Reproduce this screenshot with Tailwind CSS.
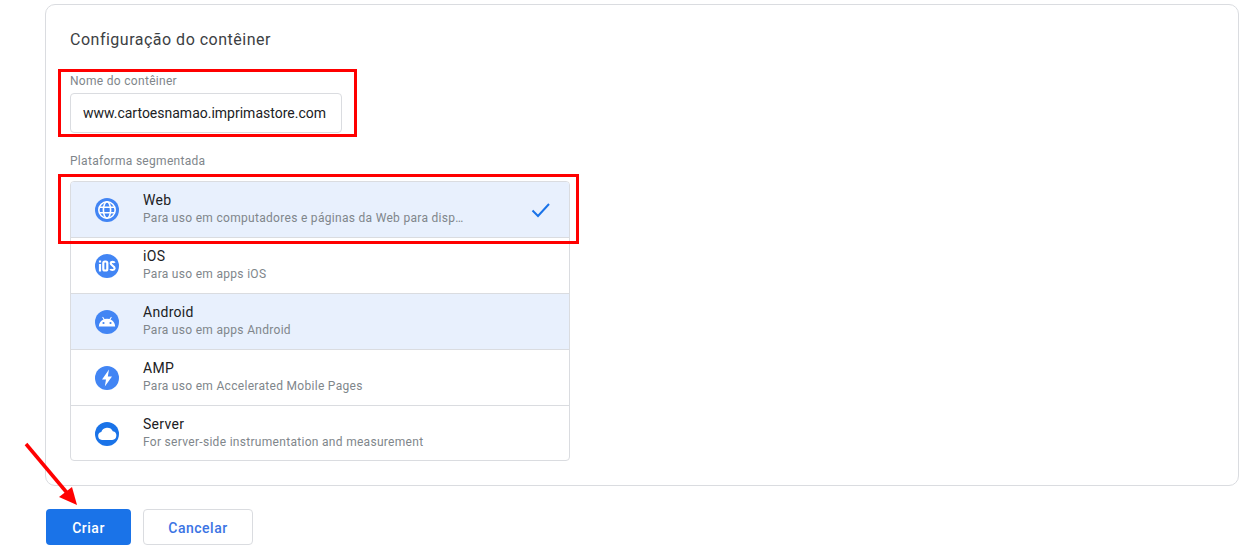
<!DOCTYPE html>
<html lang="pt">
<head>
<meta charset="utf-8">
<script src="https://cdn.jsdelivr.net/npm/@tailwindcss/browser@4"></script>
<title>Configuração do contêiner</title>
</head>
<body class="relative h-[548px] w-[1257px] overflow-hidden bg-white font-['Roboto',sans-serif]">
<main class="pl-[45px] pt-[4px]">
  <section class="h-[482px] w-[1194px] rounded-[10px] border border-[#dadce0] pl-[24px] pt-[25px]">
    <h2 class="h-[20px] text-[16px] leading-[20px] tracking-[0.5px] text-[#3c4043]">Configuração do contêiner</h2>
    <p class="mt-[24px] h-[14px] text-[12px] leading-[14px] tracking-[0.3px] text-[#80868b]">Nome do contêiner</p>
    <div class="mt-[5px] flex h-[40px] w-[272px] items-center rounded-[4px] border border-[#dadce0] pl-[12px] text-[14px] tracking-[0px] text-[#202124]">www.cartoesnamao.imprimastore.com</div>
    <p class="mt-[21px] h-[14px] text-[12px] leading-[14px] tracking-[0.3px] text-[#80868b]">Plataforma segmentada</p>
    <ul class="mt-[13px] w-[500px] overflow-hidden rounded-[4px] border border-[#dadce0]">
      <li class="flex h-[56px] items-center border-b border-[#dadce0] bg-[#e8f0fd] pl-[24px]">
        <svg class="h-[24px] w-[24px] shrink-0" viewBox="0 0 24 24"><circle cx="12" cy="12" r="12" fill="#4285f4"/><g fill="none" stroke="#fff" stroke-width="1.600"><circle cx="12" cy="12" r="8.200"/><ellipse cx="12" cy="12" rx="3.600" ry="8.200"/><path d="M4.200 9.300h15.600M4.200 14.700h15.600"/></g></svg>
        <div class="mb-[2px] ml-[24px] min-w-0 flex-1"><div class="mb-[2px] text-[14px] leading-[18px] tracking-[0.3px] text-[#202124]">Web</div><div class="text-[12px] leading-[15px] tracking-[0.3px] text-[#80868b]">Para uso em computadores e páginas da Web para disp…</div></div>
        <svg class="mr-[18px] h-[20px] w-[20px] shrink-0" viewBox="0 0 20 20"><path d="M1.500 10.500l5.500 5.500L18 4" fill="none" stroke="#1a73e8" stroke-width="2"/></svg>
      </li>
      <li class="flex h-[56px] items-center border-b border-[#dadce0] pl-[24px]">
        <svg class="h-[24px] w-[24px] shrink-0" viewBox="0 0 24 24"><circle cx="12" cy="12" r="12" fill="#4285f4"/><g fill="none" stroke="#fff" stroke-width="2.200"><path d="M5 10v7.500M5 6.500v2"/><rect x="8.300" y="7.500" width="4" height="9" rx="1.500"/><path d="M19.600 8.800c-.5-1.200-3.700-1.600-3.900.4-.2 2.500 4.100 2.300 3.900 5.200-.2 2.100-3.700 2-4.200.6"/></g></svg>
        <div class="mb-[2px] ml-[24px] flex-1"><div class="mb-[2px] text-[14px] leading-[18px] tracking-[0.3px] text-[#202124]">iOS</div><div class="text-[12px] leading-[15px] tracking-[0.3px] text-[#80868b]">Para uso em apps iOS</div></div>
      </li>
      <li class="flex h-[56px] items-center border-b border-[#dadce0] bg-[#e8f0fd] pl-[24px]">
        <svg class="h-[24px] w-[24px] shrink-0" viewBox="0 0 24 24"><circle cx="12" cy="12" r="12" fill="#4285f4"/><path d="M3.800 16.500c.2-3.600 2.200-6 4.700-7L7.200 7.300l.8-.5 1.500 2.300a8 8 0 0 1 5 0L16 6.800l.8.5-1.300 2.200c2.500 1 4.500 3.400 4.700 7z" fill="#fff"/><circle cx="8.500" cy="13" r="1.100" fill="#4285f4"/><circle cx="15.500" cy="13" r="1.100" fill="#4285f4"/></svg>
        <div class="mb-[2px] ml-[24px] flex-1"><div class="mb-[2px] text-[14px] leading-[18px] tracking-[0.3px] text-[#202124]">Android</div><div class="text-[12px] leading-[15px] tracking-[0.3px] text-[#80868b]">Para uso em apps Android</div></div>
      </li>
      <li class="flex h-[56px] items-center border-b border-[#dadce0] pl-[24px]">
        <svg class="h-[24px] w-[24px] shrink-0" viewBox="0 0 24 24"><circle cx="12" cy="12" r="12" fill="#4285f4"/><path d="M14 3.500L7 13.500h4L9.800 20.500l7.200-10h-4.200z" fill="#fff"/></svg>
        <div class="mb-[2px] ml-[24px] flex-1"><div class="mb-[2px] text-[14px] leading-[18px] tracking-[0.3px] text-[#202124]">AMP</div><div class="text-[12px] leading-[15px] tracking-[0.3px] text-[#80868b]">Para uso em Accelerated Mobile Pages</div></div>
      </li>
      <li class="flex h-[54px] items-center pl-[24px]">
        <svg class="mt-[1px] h-[24px] w-[24px] shrink-0" viewBox="0 0 24 24"><circle cx="12" cy="12" r="12" fill="#1a73e8"/><path d="M7 18a4 4 0 0 1-.7-7.900 6.200 6.200 0 0 1 11.500-.9 4.450 4.450 0 0 1-.6 8.800z" fill="#fff"/></svg>
        <div class="mb-[1px] ml-[24px] flex-1"><div class="mb-[2px] text-[14px] leading-[18px] tracking-[0.3px] text-[#202124]">Server</div><div class="text-[12px] leading-[15px] tracking-[0.3px] text-[#80868b]">For server-side instrumentation and measurement</div></div>
      </li>
    </ul>
  </section>
  <div class="ml-px mt-[23px] flex gap-[12px]">
    <button class="h-[36px] w-[85px] rounded-[4px] bg-[#1a73e8] pt-[2px] text-[14px] font-medium tracking-[0.5px] text-white">Criar</button>
    <button class="h-[36px] w-[110px] rounded-[4px] border border-[#dadce0] bg-white pt-[2px] text-[14px] font-medium tracking-[0.5px] text-[#3b74e4]">Cancelar</button>
  </div>
</main>
<div class="absolute left-[58px] top-[69px] h-[68px] w-[299px] border-[3px] border-[#ff0000]"></div>
<div class="absolute left-[58px] top-[174px] h-[70px] w-[521px] border-[3px] border-[#ff0000]"></div>
<svg class="absolute left-[20px] top-[440px] h-[70px] w-[65px]" viewBox="0 0 65 70"><path d="M6 4L48 54" stroke="#ff0000" stroke-width="3.500" fill="none"/><path d="M57 65L39 57 52 47z" fill="#ff0000"/></svg>
</body>
</html>
